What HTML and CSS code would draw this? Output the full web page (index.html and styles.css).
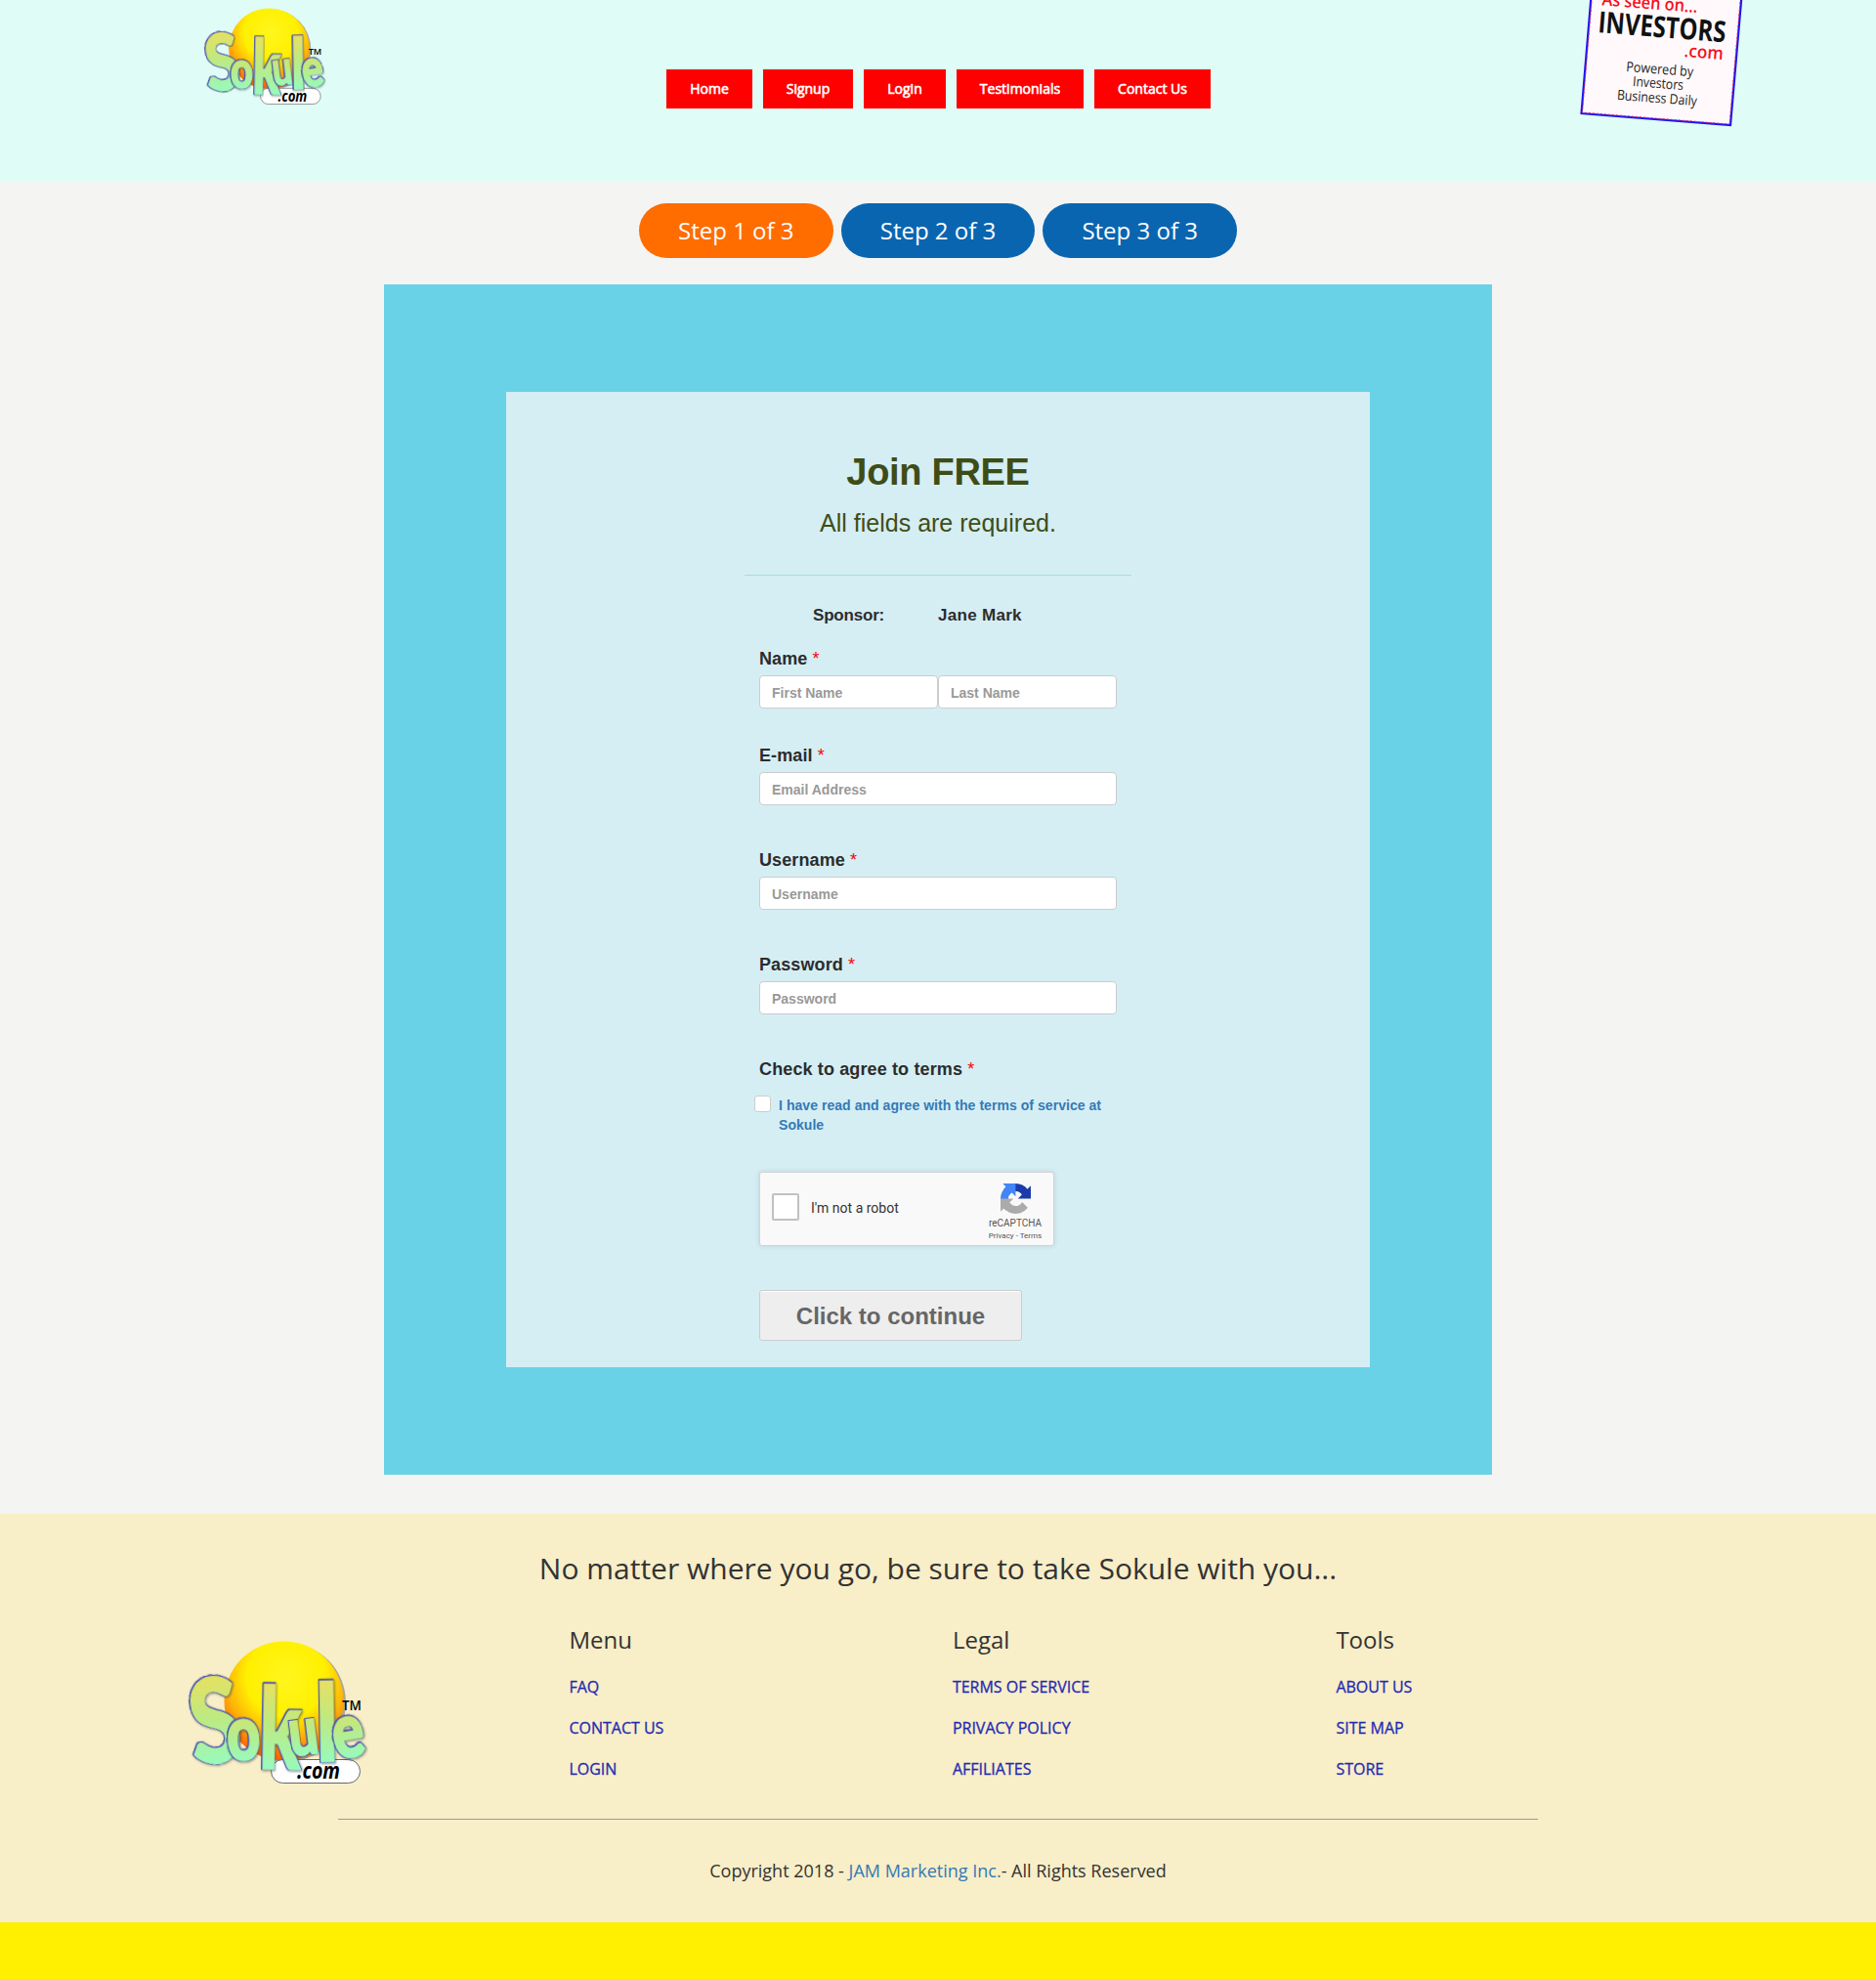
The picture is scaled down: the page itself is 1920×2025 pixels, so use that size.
FILE: index.html
```html
<!DOCTYPE html>
<html lang="en">
<head>
<meta charset="utf-8">
<title>Sokule - Join FREE</title>
<link rel="stylesheet" href="styles.css">
</head>
<body>
<svg class="defs" aria-hidden="true">
  <defs>
    <radialGradient id="sun" cx="0.52" cy="0.3" r="0.74">
      <stop offset="0" stop-color="#fff61e"/>
      <stop offset="0.45" stop-color="#fff000"/>
      <stop offset="0.68" stop-color="#ffb408"/>
      <stop offset="1" stop-color="#fb4a05"/>
    </radialGradient>
    <linearGradient id="letter" x1="0" y1="0" x2="0" y2="1">
      <stop offset="0.15" stop-color="#ecdf5c"/>
      <stop offset="0.5" stop-color="#bdea82"/>
      <stop offset="0.85" stop-color="#96fbc0"/>
    </linearGradient>
    <symbol id="sokule" viewBox="20 16 192 152">
      <circle cx="122" cy="82" r="61" fill="#8d8a80" opacity=".7"/>
      <circle cx="119.500" cy="80.500" r="61" fill="url(#sun)"/>
      <rect x="106.500" y="140.500" width="91" height="24" rx="12" fill="#fff" stroke="#666"/>
      <text class="logo-com" x="133" y="160" textLength="44" lengthAdjust="spacingAndGlyphs">.com</text>
      <g class="logo-letters">
        <text transform="translate(28 146) rotate(-7) scale(.92 1.15)" font-size="102">S</text>
        <text transform="translate(62 141) rotate(-2) scale(.95 1.27)" font-size="62">o</text>
        <text transform="translate(94 149) rotate(1) scale(.82 1.22)" font-size="94">k</text>
        <text transform="translate(127 137) rotate(-7) scale(.78 1.02)" font-size="68">u</text>
        <text transform="translate(153 142) rotate(-1) scale(1 1.2)" font-size="90">l</text>
        <text transform="translate(173 140) rotate(-9) scale(1 1.3)" font-size="60">e</text>
      </g>
      <text class="logo-tm" x="179" y="89.500" textLength="20" lengthAdjust="spacingAndGlyphs">TM</text>
    </symbol>
  </defs>
</svg>

<header class="header">
  <svg class="header-logo" role="img" aria-label="Sokule.com"><use href="#sokule"/></svg>
  <nav class="nav">
    <a class="nav-home">Home</a><a class="nav-signup">Signup</a><a class="nav-login">Login</a><a class="nav-test">Testimonials</a><a class="nav-contact">Contact Us</a>
  </nav>
  <svg class="badge" viewBox="0 0 180 140">
    <polygon points="19,-10 173,-10 161,128 8.500,116" fill="#fff9fb" stroke="#1c14f5" stroke-width="2.200"/>
    <polygon points="20,-10 172,-10 160,127 9.500,115" fill="none" stroke="#f0305a" stroke-width="1" stroke-dasharray="2 2"/>
    <g transform="rotate(4.500 25 33)">
      <text class="badge-red" x="27" y="5" font-size="18" textLength="98" lengthAdjust="spacingAndGlyphs">As seen on...</text>
      <text class="badge-name" x="25" y="33" textLength="131" lengthAdjust="spacingAndGlyphs">INVESTORS</text>
      <text class="badge-red" x="115" y="51" font-size="18" textLength="40" lengthAdjust="spacingAndGlyphs">.com</text>
      <text class="badge-small" x="57" y="70.500" textLength="69" lengthAdjust="spacingAndGlyphs">Powered by</text>
      <text class="badge-small" x="65" y="85" textLength="52" lengthAdjust="spacingAndGlyphs">Investors</text>
      <text class="badge-small" x="50" y="100" textLength="82" lengthAdjust="spacingAndGlyphs">Business Daily</text>
    </g>
  </svg>
</header>

<main class="main">
  <div class="steps">
    <span class="step step-active">Step 1 of 3</span>
    <span class="step">Step 2 of 3</span>
    <span class="step">Step 3 of 3</span>
  </div>
  <section class="panel">
    <form class="card">
      <h1>Join FREE</h1>
      <p class="subtitle">All fields are required.</p>
      <div class="rule"></div>
      <div class="fields">
        <div class="sponsor"><span class="sponsor-label">Sponsor:</span><span class="sponsor-name">Jane Mark</span></div>
        <div class="field field-name">
          <label>Name <i>*</i></label>
          <div class="pair"><input type="text" placeholder="First Name"><input type="text" placeholder="Last Name"></div>
        </div>
        <div class="field field-email"><label>E-mail <i>*</i></label><input type="text" placeholder="Email Address"></div>
        <div class="field"><label>Username <i>*</i></label><input type="text" placeholder="Username"></div>
        <div class="field"><label>Password <i>*</i></label><input type="password" placeholder="Password"></div>
        <div class="field"><label class="label-terms">Check to agree to terms <i>*</i></label></div>
        <div class="terms"><span class="box"></span><a>I have read and agree with the terms of service at<br>Sokule</a></div>
        <div class="captcha">
          <span class="captcha-box"></span>
          <span class="captcha-text">I'm not a robot</span>
          <div class="captcha-brand">
            <svg viewBox="0 0 64 64" width="31" height="31">
              <path fill="#1c3aa9" d="M64 31.955a33 33 0 0 0-.033-1.370V4.687l-7.160 7.160C50.948 4.674 42.033.093 32.050.093c-10.389 0-19.619 4.961-25.458 12.644l11.736 11.860a15.550 15.550 0 0 1 4.754-5.336c2.050-1.600 4.954-2.906 8.968-2.906.485 0 .859.057 1.134.163 4.973.393 9.284 3.137 11.822 7.120l-8.307 8.307L64 31.955"/>
              <path fill="#4285f4" d="M31.862.094a33 33 0 0 0-1.370.033H4.594l7.160 7.160C4.582 13.147 0 22.062 0 32.045c0 10.389 4.961 19.619 12.644 25.458l11.860-11.736a15.550 15.550 0 0 1-5.336-4.754c-1.600-2.050-2.906-4.954-2.906-8.968 0-.485.057-.859.163-1.134.393-4.973 3.137-9.284 7.120-11.822l8.307 8.307-.010-27.302"/>
              <path fill="#ababab" d="M.001 32.045q.002.690.033 1.370v25.898l7.160-7.160c5.860 7.173 14.774 11.754 24.757 11.754 10.389 0 19.619-4.961 25.458-12.644l-11.736-11.860a15.550 15.550 0 0 1-4.754 5.336c-2.050 1.600-4.954 2.906-8.968 2.906-.485 0-.859-.057-1.134-.163-4.973-.393-9.284-3.137-11.822-7.120l8.307-8.307L0 32.045"/>
            </svg>
            <span class="captcha-name">reCAPTCHA</span>
            <span class="captcha-links">Privacy - Terms</span>
          </div>
        </div>
        <button type="button" class="submit">Click to continue</button>
      </div>
    </form>
  </section>
</main>

<footer class="footer">
  <h2>No matter where you go, be sure to take Sokule with you...</h2>
  <div class="columns">
    <svg class="footer-logo" role="img" aria-label="Sokule.com"><use href="#sokule"/></svg>
    <div class="column"><h3>Menu</h3><a>FAQ</a><a>CONTACT US</a><a>LOGIN</a></div>
    <div class="column"><h3>Legal</h3><a>TERMS OF SERVICE</a><a>PRIVACY POLICY</a><a>AFFILIATES</a></div>
    <div class="column"><h3>Tools</h3><a>ABOUT US</a><a>SITE MAP</a><a>STORE</a></div>
  </div>
  <div class="footer-rule"></div>
  <p class="copyright">Copyright 2018 - <a>JAM Marketing Inc.</a>- All Rights Reserved</p>
</footer>
</body>
</html>
```
FILE: styles.css
```css
* { box-sizing: border-box; }
body { margin: 0; height: 2025px; background: #ffef00; font-family: "Open Sans", sans-serif; color: #333; overflow: hidden; }
h1, h2, h3, p { margin: 0; font-weight: 400; }
.defs { position: absolute; width: 0; height: 0; }

.logo-letters { font-family: "Lato", sans-serif; font-weight: 900; }
.logo-letters text { fill: url(#letter); stroke: url(#letter); stroke-width: 2px; filter: drop-shadow(.9px 0 0 #4d57b0) drop-shadow(-.9px 0 0 #4d57b0) drop-shadow(0 .8px 0 #4d57b0) drop-shadow(0 -.8px 0 #4d57b0) drop-shadow(1px 1.500px 1px rgba(50, 50, 60, .5)); }
.logo-com { font: italic 700 24px "Open Sans", sans-serif; }
.logo-tm { font: 600 14px "Open Sans", sans-serif; }

.header { display: flex; height: 186px; background: #e0fcf6; overflow: hidden; }
.header-logo { width: 130px; height: 103px; margin: 6px 0 0 208px; }
.nav { display: flex; gap: 11px; width: 557px; height: 40px; margin: 71px 0 0 344px; }
.nav a { background: #f00; color: #fff; font-size: 14px; line-height: 40px; text-align: center; white-space: nowrap; -webkit-text-stroke: .6px #fff; }
.nav-home { width: 88px; }
.nav-signup { width: 92px; }
.nav-login { width: 84px; }
.nav-test { width: 130px; }
.nav-contact { width: 119px; }
.badge { width: 180px; height: 140px; margin-left: 371px; }
.badge-red { font-family: "Open Sans", sans-serif; font-weight: 600; fill: #f5101c; }
.badge-name { font: 700 30px "Open Sans", sans-serif; fill: #111; }
.badge-small { font: 400 14px "Open Sans", sans-serif; fill: #222; }

.main { height: 1363px; background: #f4f4f3; padding-top: 22px; }
.steps { display: flex; justify-content: center; gap: 8px; }
.step { width: 198.700px; height: 56px; border-radius: 28px; background: #0a65b1; color: #fff; font-size: 24px; line-height: 56px; text-align: center; }
.step-active { background: #ff6c00; }
.panel { width: 1134px; height: 1218px; margin: 27px auto 0; padding: 110px 125px 0; background: #69d2e7; }
.card { height: 998px; padding-top: 60px; background: #d5eef4; font-family: "Liberation Sans", Arial, sans-serif; text-align: center; }
.card h1 { font-size: 38px; line-height: 44px; font-weight: 700; letter-spacing: -.3px; color: #3e4d16; }
.subtitle { margin-top: 15px; font-size: 25px; line-height: 30px; color: #3e4d16; }
.rule { width: 396px; height: 1px; margin: 38px auto 0; background: #a9dbe3; }
.fields { width: 366px; margin: 31px auto 0; text-align: left; color: #2c2c2c; }
.sponsor { display: flex; font-size: 17px; line-height: 20px; font-weight: 700; }
.sponsor-label { width: 183px; padding-left: 55px; letter-spacing: -.2px; }
.sponsor-name { letter-spacing: .3px; }
.field { margin-top: 44px; }
.field-name { margin-top: 22px; }
.field-email { margin-top: 36px; }
.field label { display: block; font-size: 18px; line-height: 24px; font-weight: 700; letter-spacing: .1px; }
.field .label-terms { letter-spacing: .13px; }
.field i { font-style: normal; font-weight: 400; color: #f00; }
.pair { display: flex; }
.field input { display: block; width: 100%; height: 34px; margin: 5px 0 0; padding: 2px 12px 0; border: 1px solid #ccc; border-radius: 4px; background: #fff; font: 700 14px "Liberation Sans", Arial, sans-serif; }
.field input::placeholder { color: #999; opacity: 1; }
.terms { display: flex; margin: 15px 0 0 -5px; gap: 8px; font-size: 14px; line-height: 20px; font-weight: 700; letter-spacing: .05px; color: #337ab7; white-space: nowrap; }
.box { width: 17px; height: 17px; border: 1px solid #ccc; border-radius: 3px; background: #fff; }
.captcha { display: flex; width: 302px; height: 76px; margin-top: 38px; border: 1px solid #d3d3d3; border-radius: 3px; background: #f9f9f9; box-shadow: 0 0 4px 1px rgba(0, 0, 0, .08); font-family: Roboto, sans-serif; color: #333; }
.captcha-box { width: 28px; height: 28px; margin: 21px 12px 0; border: 2px solid #c1c1c1; border-radius: 2px; background: #fff; }
.captcha-text { width: 169px; padding: 26px 0 0; font-size: 14px; line-height: 20px; }
.captcha-brand { display: flex; flex-direction: column; align-items: center; width: 79px; padding: 11px 0 0 1px; color: #555; white-space: nowrap; }
.captcha-name { margin-top: 4px; font-size: 10px; line-height: 12px; }
.captcha-links { font-size: 8px; line-height: 13px; }
.submit { display: block; width: 269px; height: 52px; margin-top: 45px; padding: 2px 0 0; border: 1px solid #ccc; border-radius: 3px; background: #eee; box-shadow: inset 0 1px 0 #fff; color: #666; font: 700 24px "Liberation Sans", Arial, sans-serif; }

.footer { height: 418px; padding-top: 36px; background: #f8eec8; }
.footer h2 { font-size: 30px; line-height: 40px; text-align: center; }
.columns { display: grid; grid-template-columns: 392.400px 392.500px 392.500px 1fr; height: 236px; padding: 36px 0 0 190px; }
.footer-logo { width: 192px; height: 152px; margin: 15px 0 0 1px; }
.column h3 { margin-bottom: 10px; font-size: 24px; line-height: 34px; }
.column a { display: block; font-size: 16px; line-height: 42px; color: #1f2bb4; -webkit-text-stroke: .3px #1f2bb4; }
.footer-rule { width: 1228px; height: 1px; margin: 0 auto; background: #8da09d; }
.copyright { margin-top: 37px; font-size: 18px; line-height: 30px; text-align: center; }
.copyright a { color: #337ab7; }
```
